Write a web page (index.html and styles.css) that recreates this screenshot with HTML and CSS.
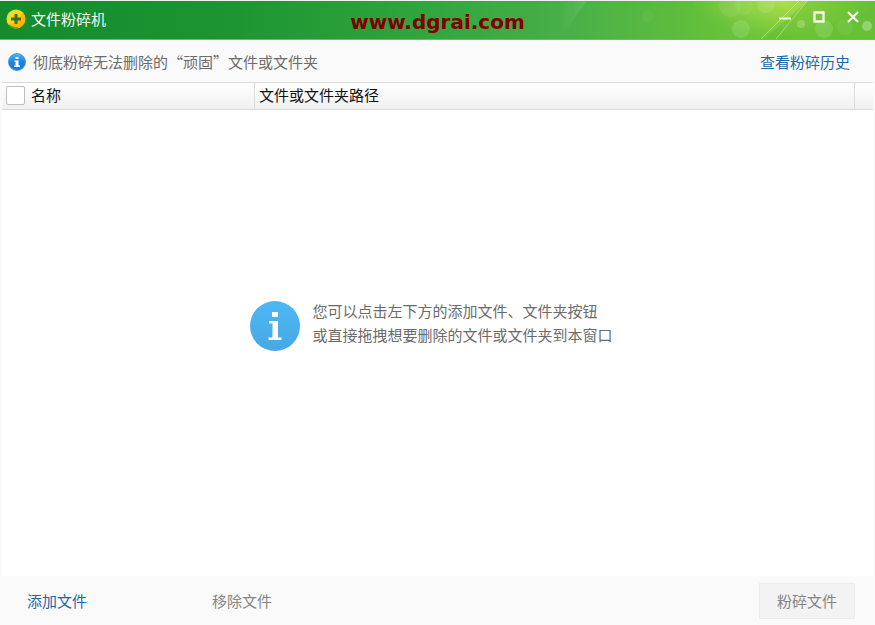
FILE: index.html
```
<!DOCTYPE html>
<html lang="zh-CN">

<head>
    <meta charset="UTF-8">
    <meta name="viewport" content="width=device-width, initial-scale=1.0">
    <title>文件粉碎机</title>
    <link rel="stylesheet" href="styles.css">
</head>

<body>
    <header class="titlebar">
        <svg class="titlebar-art" width="315" height="38" viewBox="560 1 315 38" aria-hidden="true">
            <defs>
                <radialGradient id="glow">
                    <stop offset="0" stop-color="#c8e85a" stop-opacity=".7" />
                    <stop offset="1" stop-color="#b4e050" stop-opacity="0" />
                </radialGradient>
                <linearGradient id="ray" x1="0" y1="0" x2="1" y2="0">
                    <stop offset="0" stop-color="#fff" stop-opacity="0" />
                    <stop offset="1" stop-color="#fff" stop-opacity=".1" />
                </linearGradient>
            </defs>
            <path d="M560 1h27l-28 38z" fill="url(#ray)" />
            <ellipse cx="782" cy="1" rx="90" ry="36" fill="url(#glow)" />
            <path d="M808 1h67v38H764z" fill="#52b82e" opacity=".35" />
            <g fill="#fff">
                <circle cx="741" cy="29" r="9" opacity=".13" />
                <circle cx="730" cy="6" r="11" opacity=".07" />
                <circle cx="744" cy="6" r="9" opacity=".07" />
                <circle cx="766" cy="4" r="9" opacity=".1" />
                <circle cx="648" cy="16" r="6" opacity=".04" />
                <circle cx="801" cy="24" r="4" opacity=".22" />
                <circle cx="824" cy="29" r="9" opacity=".13" />
                <circle cx="845" cy="27" r="8" opacity=".06" />
                <circle cx="867" cy="26" r="5" opacity=".3" />
            </g>
            <path d="M799 1L761 39M807 1L776 39" stroke="#e4f8b8" stroke-width="1" opacity=".45" />
        </svg>
        <h1 class="title">
            <svg width="20" height="20" viewBox="0 0 20 20" aria-hidden="true">
                <defs>
                    <linearGradient id="ball" x1="0" y1="0" x2="1" y2="1">
                        <stop offset="0" stop-color="#d8e83a" />
                        <stop offset=".45" stop-color="#ffd51c" />
                        <stop offset="1" stop-color="#f5a000" />
                    </linearGradient>
                </defs>
                <circle cx="10" cy="10" r="9.5" fill="url(#ball)" />
                <path d="M2 14Q9 18 17 4L19 7Q20 17 10 19.500Q5 19 2 14" fill="#ffb400" opacity=".7" />
                <path d="M3 16Q6 19 12 19" fill="none" stroke="#56a51c" stroke-width="1.500" />
                <path d="M10 5v10M5 10h10" stroke="#34721b" stroke-width="3" />
            </svg>
            文件粉碎机
        </h1>
        <span class="site">www.dgrai.com</span>
        <div class="window-buttons">
            <button type="button" aria-label="最小化">
                <svg width="12" height="12" viewBox="0 0 12 12"><path d="M0 7.500h12" stroke="#f4fbe8" stroke-width="2" /></svg>
            </button>
            <button type="button" aria-label="最大化">
                <svg width="12" height="12" viewBox="0 0 12 12"><path d="M1.500 1.500h9v9h-9z" fill="none" stroke="#f4fbe8" stroke-width="2.300" /></svg>
            </button>
            <button type="button" aria-label="关闭">
                <svg width="12" height="12" viewBox="0 0 12 12"><path d="M1 1l10 10M11 1L1 11" stroke="#f4fbe8" stroke-width="2.300" /></svg>
            </button>
        </div>
    </header>

    <div class="notice">
        <svg width="18" height="18" viewBox="0 0 18 18" aria-hidden="true">
            <defs>
                <linearGradient id="info" x1="0" y1="0" x2="0" y2="1">
                    <stop offset="0" stop-color="#54b4f4" />
                    <stop offset=".5" stop-color="#1685e8" />
                    <stop offset="1" stop-color="#2477d8" />
                </linearGradient>
            </defs>
            <circle cx="9" cy="9" r="8.500" fill="url(#info)" stroke="#3f8fda" stroke-width=".8" />
            <path d="M7.500 4h3v2h-3zM6.500 7.500h4v5h1.500V14H6v-1.500h1.500V9h-1z" fill="#fff" />
        </svg>
        <p>彻底粉碎无法删除的“顽固”文件或文件夹</p>
        <a href="#history">查看粉碎历史</a>
    </div>

    <main class="panel">
        <table class="files">
            <thead>
                <tr>
                    <th class="col-name"><label><input type="checkbox">名称</label></th>
                    <th class="col-path">文件或文件夹路径</th>
                    <td class="col-end"></td>
                </tr>
            </thead>
        </table>
        <div class="empty">
            <svg width="50" height="50" viewBox="0 0 50 50" aria-hidden="true">
                <defs>
                    <linearGradient id="big" x1="0" y1="0" x2="0" y2="1">
                        <stop offset="0" stop-color="#4db8f4" />
                        <stop offset="1" stop-color="#46a8e4" />
                    </linearGradient>
                </defs>
                <circle cx="25" cy="25" r="25" fill="url(#big)" />
                <path d="M22 11h6v5h-6zM19 20h9v16.500h3.500V39H18.500v-2.500H22.500v-14H19z" fill="#fff" />
            </svg>
            <p>您可以点击左下方的添加文件、文件夹按钮<br>或直接拖拽想要删除的文件或文件夹到本窗口</p>
        </div>
    </main>

    <footer class="footer">
        <button type="button" class="add-btn">添加文件</button>
        <button type="button" class="remove-btn" disabled>移除文件</button>
        <button type="button" class="shred-btn" disabled>粉碎文件</button>
    </footer>
</body>

</html>
```

FILE: styles.css
```
* {
    box-sizing: border-box;
}

body {
    display: flex;
    flex-direction: column;
    min-height: 100vh;
    margin: 0;
    background-color: #fafafa;
    color: #6b6b6b;
    font-family: "Noto Sans CJK SC", sans-serif;
    font-size: 15px;
    line-height: 24px;
}

p,
h1 {
    margin: 0;
}

svg {
    display: block;
    flex: none;
}

button {
    padding: 0;
    border: none;
    background: none;
    font: inherit;
    cursor: pointer;
}

a {
    color: #1d66a9;
    text-decoration: none;
}

.titlebar {
    position: relative;
    display: grid;
    grid-template-columns: 1fr auto 1fr;
    align-items: center;
    height: 40px;
    padding: 0 16px;
    border-top: 1px solid #eef3ee;
    border-bottom: 1px solid #6abd66;
    background: linear-gradient(to right, #148c2c 0%, #1b9431 25%, #2fa33c 46%, #4ab148 66%, #62bf3c 80%, #78ca38 92%, #70c43c 100%);
}

.titlebar-art {
    position: absolute;
    top: 0;
    right: 0;
}

.title {
    display: flex;
    align-items: center;
    gap: 5px;
    margin-left: -10px;
    padding-bottom: 2px;
    color: #f2faf2;
    font-size: 15px;
    font-weight: normal;
}

.site {
    position: relative;
    padding-top: 4px;
    color: #800000;
    font-family: "DejaVu Sans", sans-serif;
    font-size: 20px;
    font-weight: bold;
}

.window-buttons {
    position: relative;
    display: flex;
    justify-content: flex-end;
    gap: 22px;
    padding-bottom: 6px;
}

.notice {
    display: flex;
    align-items: center;
    gap: 7px;
    height: 42px;
    padding: 2px 25px 0 8px;
}

.notice a {
    margin-left: auto;
}

.panel {
    display: flex;
    flex: 1;
    flex-direction: column;
    margin: 0 2px;
    background-color: #fff;
}

.files {
    width: 100%;
    table-layout: fixed;
    border-collapse: separate;
    border-spacing: 0;
    border-top: 1px solid #dadada;
    border-bottom: 1px solid #dadada;
    background: linear-gradient(#fff, #f0f0f0);
    color: #111;
}

.files th,
.files td {
    height: 26px;
    padding: 0 0 2px 4px;
    border-right: 1px solid #ddd;
    font-weight: normal;
    text-align: left;
}

.files .col-name {
    width: 253px;
}

.files .col-end {
    width: 18px;
    border-right: none;
}

.files label {
    display: flex;
    align-items: center;
    gap: 6px;
}

.files input {
    appearance: none;
    width: 19px;
    height: 19px;
    margin: 0;
    border: 1px solid #bdbdbd;
    border-radius: 2px;
    background-color: #fff;
}

.files input:checked {
    background-color: #1685e8;
}

.empty {
    display: flex;
    flex: 1;
    align-items: center;
    justify-content: center;
    gap: 12px;
    padding: 0 12px 34px 0;
}

.empty p {
    padding-bottom: 6px;
}

.footer {
    display: flex;
    align-items: center;
    height: 49px;
    padding: 0 20px 0 27px;
}

.add-btn {
    color: #1d66a9;
}

.remove-btn {
    margin-left: 125px;
    color: #858585;
}

.shred-btn {
    width: 96px;
    height: 36px;
    margin-left: auto;
    border: 1px solid #ececec;
    background-color: #f3f3f3;
    color: #858585;
}

button:disabled {
    cursor: default;
}
```
